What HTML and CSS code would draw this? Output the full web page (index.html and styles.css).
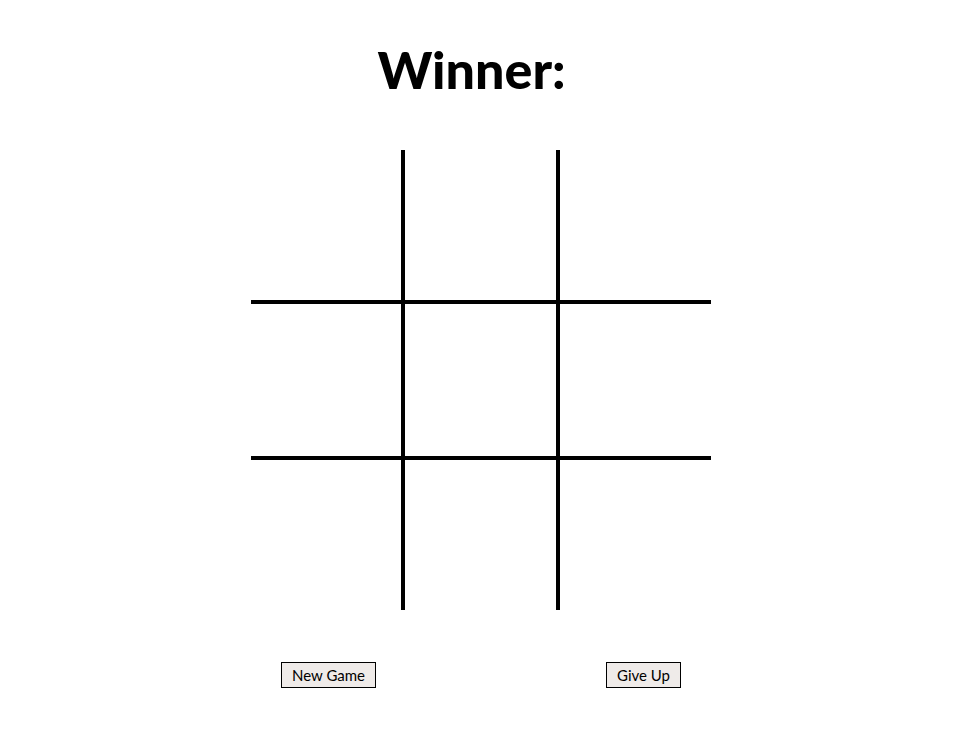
FILE: index.html
```html
<!DOCTYPE html>
<html>
<head>
<meta charset="utf-8">
<link rel="stylesheet" href="styles.css">
</head>
<body>
<h1 class="title">Winner:</h1>
<div class="board">
  <div class="cell"></div><div class="cell"></div><div class="cell"></div>
  <div class="cell"></div><div class="cell"></div><div class="cell"></div>
  <div class="cell"></div><div class="cell"></div><div class="cell"></div>
</div>
<div class="controls">
  <button class="btn">New Game</button>
  <button class="btn">Give Up</button>
</div>
</body>
</html>
```
FILE: styles.css
```css
html, body {
  margin: 0;
  padding: 0;
  background: #fff;
}
body {
  font-family: Lato, "Liberation Sans", sans-serif;
  color: #000;
}
.title {
  margin: 0;
  padding-top: 39px;
  height: 150px;
  box-sizing: border-box;
  text-align: center;
  font-size: 52px;
  font-weight: 900;
  line-height: 60px;
  padding-right: 16px;
}
.board {
  width: 460px;
  height: 460px;
  margin: 0 0 0 251px;
  display: grid;
  grid-template-columns: 150px 151px 151px;
  grid-template-rows: 150px 152px 150px;
  gap: 4px;
  background: #000;
}
.cell {
  background: #fff;
}
.controls {
  width: 460px;
  margin: 52px 0 0 251px;
  padding: 0 30px;
  box-sizing: border-box;
  display: flex;
  justify-content: space-between;
}
.btn {
  font-family: Lato, "Liberation Sans", sans-serif;
  font-size: 15px;
  height: 26px;
  padding: 0 10px;
  background: #efebe9;
  border: 1px solid #000;
  border-radius: 0;
  color: #000;
}
```
